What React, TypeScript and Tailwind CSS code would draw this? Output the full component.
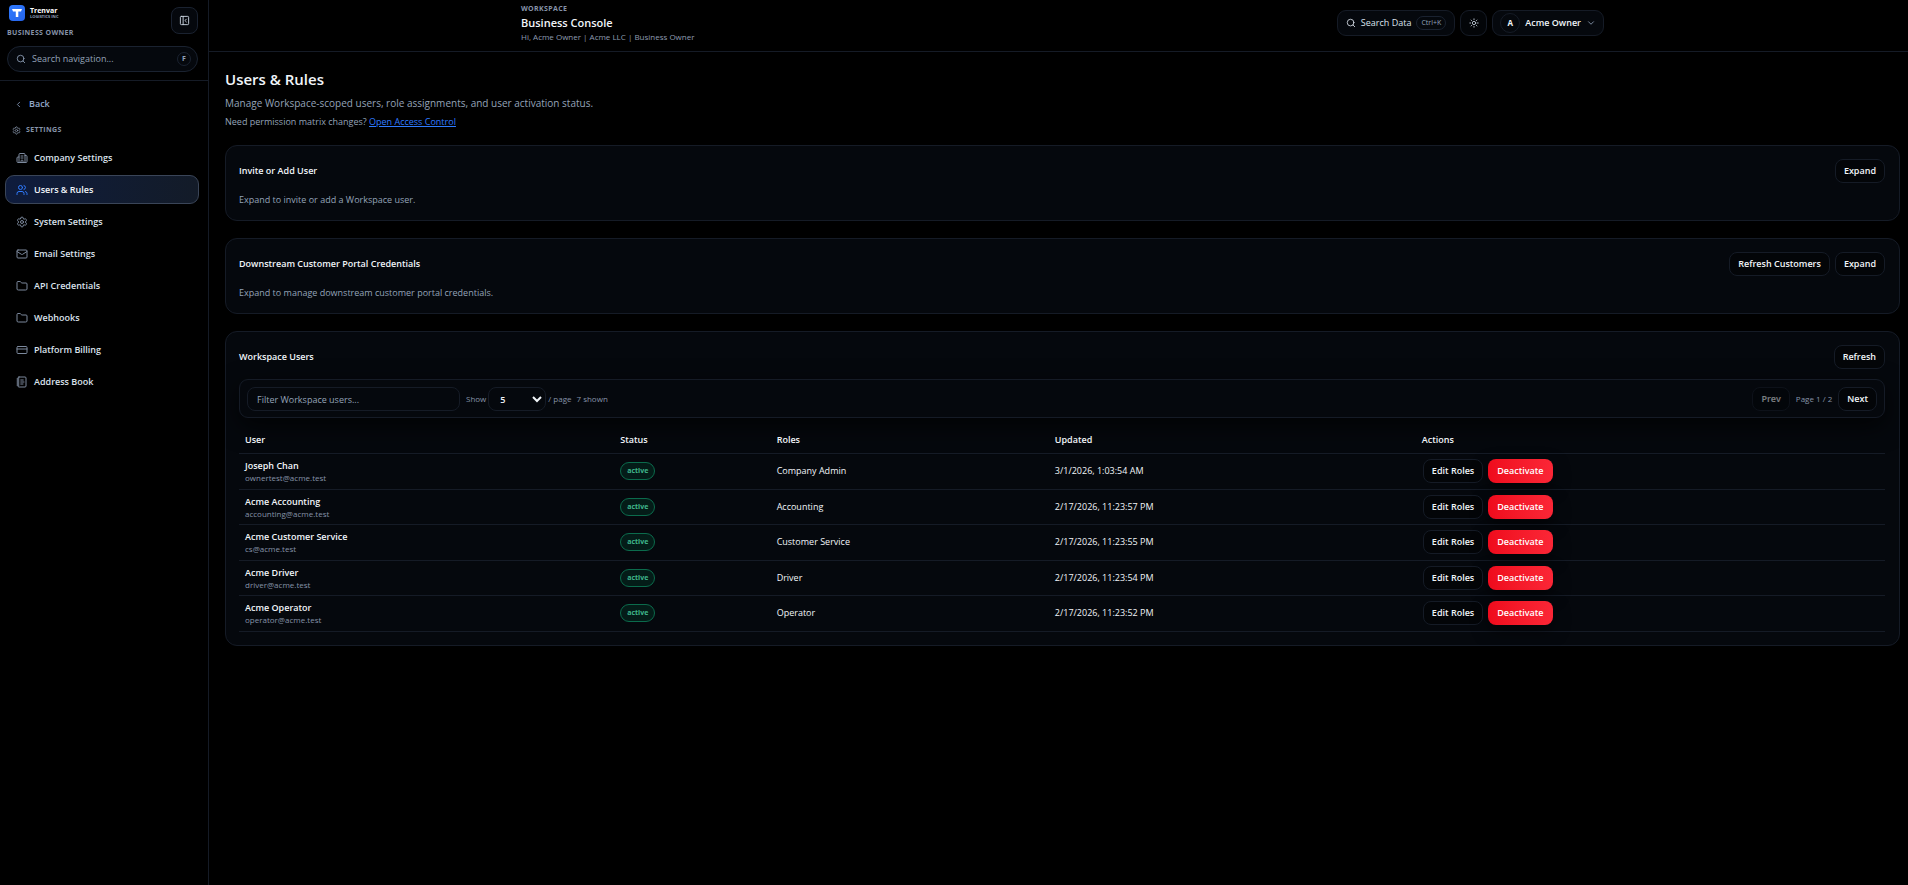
import { ReactNode, useState } from "react";
import {
  Building2,
  ChevronDown,
  ChevronLeft,
  CreditCard,
  Folder,
  LucideIcon,
  Mail,
  NotebookText,
  PanelLeftClose,
  Search,
  Settings,
  Sun,
  Users,
} from "lucide-react";

type WorkspaceUser = {
  name: string;
  email: string;
  role: string;
  updated: string;
};

const navItems: { label: string; icon: LucideIcon }[] = [
  { label: "Company Settings", icon: Building2 },
  { label: "Users & Rules", icon: Users },
  { label: "System Settings", icon: Settings },
  { label: "Email Settings", icon: Mail },
  { label: "API Credentials", icon: Folder },
  { label: "Webhooks", icon: Folder },
  { label: "Platform Billing", icon: CreditCard },
  { label: "Address Book", icon: NotebookText },
];

const users: WorkspaceUser[] = [
  { name: "Joseph Chan", email: "ownertest@acme.test", role: "Company Admin", updated: "3/1/2026, 1:03:54 AM" },
  { name: "Acme Accounting", email: "accounting@acme.test", role: "Accounting", updated: "2/17/2026, 11:23:57 PM" },
  { name: "Acme Customer Service", email: "cs@acme.test", role: "Customer Service", updated: "2/17/2026, 11:23:55 PM" },
  { name: "Acme Driver", email: "driver@acme.test", role: "Driver", updated: "2/17/2026, 11:23:54 PM" },
  { name: "Acme Operator", email: "operator@acme.test", role: "Operator", updated: "2/17/2026, 11:23:52 PM" },
];

const Button = ({ children, disabled }: { children: ReactNode; disabled?: boolean }) => (
  <button
    disabled={disabled}
    className="h-6 shrink-0 whitespace-nowrap rounded-lg border border-[#151b26] bg-[#030508] px-2 text-[9px] font-semibold text-[#f1f5f9] disabled:opacity-50"
  >
    {children}
  </button>
);

const Card = ({
  title,
  actions,
  children,
}: {
  title: string;
  actions: ReactNode;
  children: ReactNode;
}) => (
  <section className="rounded-xl border border-[#151b26] bg-[#05080d] p-[13px] pr-[14px]">
    <div className="flex items-center justify-between">
      <h2 className="text-[9px] font-semibold text-[#f1f5f9]">{title}</h2>
      <div className="flex gap-[5px]">{actions}</div>
    </div>
    {children}
  </section>
);

const Logo = () => (
  <div className="flex items-center gap-[5px] pl-[2px]">
    <svg width="16" height="16" viewBox="0 0 16 16">
      <defs>
        <linearGradient id="logo" x1="0" y1="0" x2="1" y2="1">
          <stop offset="0" stopColor="#2f7bff" />
          <stop offset="1" stopColor="#2563eb" />
        </linearGradient>
      </defs>
      <rect width="16" height="16" rx="4" fill="url(#logo)" />
      <path d="M3 4h10l-1 2.5H9.3V12H6.8V6.5H4z" fill="#fff" />
    </svg>
    <div className="flex flex-col">
      <span className="text-[7px] font-bold leading-[8px] text-white">Trenvar</span>
      <span className="text-[4px] font-bold leading-[4px] text-slate-400">LOGISTICS INC</span>
    </div>
  </div>
);

const Sidebar = () => (
  <aside className="w-[209px] shrink-0 border-r border-[#151b26]">
    <div className="border-b border-[#151b26] px-[7px] pb-2 pt-[5px]">
      <div className="flex h-[41px] items-start justify-between">
        <div>
          <Logo />
          <p className="mt-[5px] text-[7px] font-bold leading-[14px] tracking-wider text-[#8693a8]">
            BUSINESS OWNER
          </p>
        </div>
        <button
          aria-label="Collapse sidebar"
          className="mr-[3px] mt-[2px] flex size-[27px] items-center justify-center rounded-lg border border-[#1a2230] bg-[#05080d] text-slate-300"
        >
          <PanelLeftClose size={11} />
        </button>
      </div>
      <label className="mr-[3px] flex h-[26px] items-center gap-[6px] rounded-full border border-[#1a2230] bg-[#05080d] pl-2 pr-[6px] text-slate-400">
        <Search size={10} />
        <input
          aria-label="Search navigation"
          placeholder="Search navigation..."
          className="min-w-0 flex-1 bg-transparent text-[9px] outline-none placeholder:text-[#94a3b8]"
        />
        <kbd className="flex size-[14px] items-center justify-center rounded-full border border-[#1a2230] font-[inherit] text-[7px] font-bold">
          F
        </kbd>
      </label>
    </div>

    <nav className="px-[5px] pt-4">
      <a href="#back" className="flex h-[14px] items-center gap-[6px] pl-[9px] text-[9px] font-semibold text-[#94a9cb]">
        <ChevronLeft size={9} />
        Back
      </a>
      <p className="mt-3 flex h-[14px] items-center gap-[5px] pl-[7px] text-[7px] font-bold tracking-wider text-[#8693a8]">
        <Settings size={9} />
        SETTINGS
      </p>
      <ul className="mt-[6px] flex flex-col gap-[3px] pr-1">
        {navItems.map(({ label, icon: Icon }) => {
          const active = label === "Users & Rules";
          return (
            <li key={label}>
              <a
                href="#settings"
                aria-current={active ? "page" : undefined}
                className={`flex h-[29px] items-center gap-[6px] rounded-[9px] border px-[10px] text-[9px] font-semibold ${
                  active
                    ? "border-[#3a4558] bg-linear-to-r from-[#0f1c3d] to-[#131b28] text-[#f1f5f9]"
                    : "border-transparent text-[#dbe2ec]"
                }`}
              >
                <Icon size={12} className={active ? "text-[#2f7bff]" : "text-[#7c899d]"} />
                {label}
              </a>
            </li>
          );
        })}
      </ul>
    </nav>
  </aside>
);

const Header = () => (
  <header className="h-[52px] border-b border-[#151b26] pl-2">
    <div className="mx-auto flex w-full max-w-[1083px] items-start justify-between">
      <div className="pt-1">
        <p className="text-[7px] font-bold leading-[10px] tracking-wider text-[#8693a8]">WORKSPACE</p>
        <h1 className="text-[11px] font-semibold leading-[18px] text-[#f1f5f9]">Business Console</h1>
        <p className="text-[8px] leading-[10px] text-[#8f9cb0]">Hi, Acme Owner | Acme LLC | Business Owner</p>
      </div>
      <div className="flex items-center gap-[5px] pt-[10px]">
        <button className="flex h-[26px] items-center gap-[5px] rounded-[9px] border border-[#151b26] bg-[#05080d] px-2 text-[9px] font-medium text-[#dbe2ec]">
          <Search size={10} />
          Search Data
          <kbd className="rounded-full border border-[#1a2230] px-1 font-[inherit] text-[7px] leading-3 text-slate-400">
            Ctrl+K
          </kbd>
        </button>
        <button
          aria-label="Toggle theme"
          className="flex h-[26px] w-[27px] items-center justify-center rounded-[9px] border border-[#151b26] bg-[#030508] text-slate-300"
        >
          <Sun size={10} />
        </button>
        <button className="flex h-[26px] items-center gap-[5px] rounded-[9px] border border-[#151b26] bg-[#05080d] px-[7px] text-[9px] font-semibold text-[#f1f5f9]">
          <span className="flex size-5 items-center justify-center rounded-full border border-[#151b26] text-[8px] font-bold">
            A
          </span>
          Acme Owner
          <ChevronDown size={10} className="text-slate-400" />
        </button>
      </div>
    </div>
  </header>
);

const UsersTable = () => (
  <table className="mt-[9px] w-full table-fixed text-left text-[9px] text-[#f1f5f9]">
    <thead>
      <tr className="h-[26px] border-b border-[#151b26]">
        <th className="w-[22.8%] px-[6px] font-semibold">User</th>
        <th className="w-[9.5%] px-[6px] font-semibold">Status</th>
        <th className="w-[16.9%] px-[6px] font-semibold">Roles</th>
        <th className="w-[22.3%] px-[6px] font-semibold">Updated</th>
        <th className="px-[6px] font-semibold">Actions</th>
      </tr>
    </thead>
    <tbody>
      {users.map((user) => (
        <tr key={user.email} className="h-9 border-b border-[#151b26] even:h-[35px]">
          <td className="px-[6px]">
            <p className="font-semibold leading-[14px]">{user.name}</p>
            <p className="text-[8px] leading-[10px] text-[#8693a8]">{user.email}</p>
          </td>
          <td className="px-[6px]">
            <span className="flex h-[18px] w-[35px] items-center justify-center rounded-full border border-[#0b6b4c] bg-[#041c18] text-[7px] font-bold text-[#3fb68b]">
              active
            </span>
          </td>
          <td className="px-[6px] font-medium">{user.role}</td>
          <td className="px-[6px] font-medium">{user.updated}</td>
          <td className="px-[7px]">
            <div className="flex gap-[5px]">
              <Button>Edit Roles</Button>
              <button className="h-6 rounded-lg bg-linear-to-r from-[#ef0a1c] to-[#fb2636] px-[9px] text-[9px] font-semibold text-white shadow-[0_6px_16px_rgba(0,0,0,0.5)]">
                Deactivate
              </button>
            </div>
          </td>
        </tr>
      ))}
    </tbody>
  </table>
);

const App = () => {
  const [filter, setFilter] = useState("");
  const [pageSize, setPageSize] = useState("5");

  return (
    <div className="flex min-h-screen bg-black font-['Open_Sans','Noto_Sans',sans-serif] leading-[14px]">
      <Sidebar />
      <div className="min-w-0 flex-1">
        <Header />
        <main className="pb-8 pl-4 pr-2 pt-[17px]">
          <h1 className="text-[15px] font-semibold leading-5 text-[#f1f5f9]">Users &amp; Rules</h1>
          <p className="mt-[6px] text-[10px] leading-4 text-[#94a3b8]">
            Manage Workspace-scoped users, role assignments, and user activation status.
          </p>
          <p className="mt-1 text-[9px] leading-[14px] text-[#94a3b8]">
            Need permission matrix changes?{" "}
            <a href="#access" className="text-[#2f7bff] underline">
              Open Access Control
            </a>
          </p>

          <div className="mt-4 flex flex-col gap-[17px]">
            <Card title="Invite or Add User" actions={<Button>Expand</Button>}>
              <p className="mt-[10px] text-[9px] leading-[14px] text-[#94a3b8]">
                Expand to invite or add a Workspace user.
              </p>
            </Card>
            <Card
              title="Downstream Customer Portal Credentials"
              actions={
                <>
                  <Button>Refresh Customers</Button>
                  <Button>Expand</Button>
                </>
              }
            >
              <p className="mt-[10px] text-[9px] leading-[14px] text-[#94a3b8]">
                Expand to manage downstream customer portal credentials.
              </p>
            </Card>
            <Card title="Workspace Users" actions={<Button>Refresh</Button>}>
              <div className="mt-[10px] flex items-center rounded-[9px] border border-[#151b26] bg-[#05080d] px-[7px] pb-[6px] pt-[7px] text-[8px] text-[#8693a8] shadow-[0_8px_24px_rgba(0,0,0,0.7)]">
                <input
                  aria-label="Filter Workspace users"
                  placeholder="Filter Workspace users..."
                  value={filter}
                  onChange={(e) => setFilter(e.target.value)}
                  className="mr-[6px] h-6 w-[213px] rounded-lg border border-[#151b26] bg-[#05080d] px-[9px] text-[9px] outline-none placeholder:text-[#94a3b8]"
                />
                <label htmlFor="page-size">Show</label>
                <select
                  id="page-size"
                  value={pageSize}
                  onChange={(e) => setPageSize(e.target.value)}
                  className="mx-[2px] h-6 w-[58px] rounded-lg border border-[#151b26] bg-[#05080d] pl-[7px] text-[9px] font-semibold text-[#f1f5f9]"
                >
                  <option>5</option>
                  <option>10</option>
                  <option>25</option>
                </select>
                <span>/ page</span>
                <span className="ml-[5px]">7 shown</span>
                <div className="ml-auto flex items-center gap-[6px]">
                  <Button disabled>Prev</Button>
                  <span>Page 1 / 2</span>
                  <Button>Next</Button>
                </div>
              </div>
              <UsersTable />
            </Card>
          </div>
        </main>
      </div>
    </div>
  );
};

export default App;
